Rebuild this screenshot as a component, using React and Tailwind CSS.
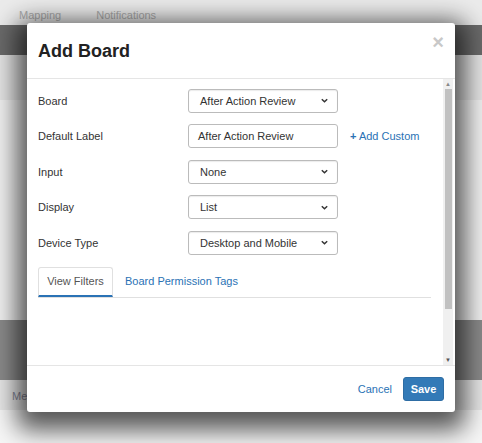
export default function App() {
  const font = { fontFamily: '"Liberation Sans", Arial, sans-serif' };
  const Chev = () => (
    <svg width="9" height="9" viewBox="0 0 10 10" className="ml-auto"><path d="M2 3.5l3 3 3-3" fill="none" stroke="#333" strokeWidth="1.6" /></svg>
  );
  const Sel = ({ v }) => (
    <div className="w-[150px] h-[24px] border border-[#bbb] rounded-[3px] flex items-center pl-[11px] pr-[8px] text-[11px] text-[#333] shadow-[inset_0_1px_1px_rgba(0,0,0,0.08)]">{v}<Chev /></div>
  );
  const Row = ({ label, children }) => (
    <div className="flex items-center h-[35.5px]">
      <div className="w-[150px] text-[11px] text-[#333]">{label}</div>
      {children}
    </div>
  );
  return (
    <div className="relative w-[482px] h-[443px] overflow-hidden bg-[#f6f6f6]" style={font}>
      <div className="h-[25px] bg-[#ebebeb] flex items-end text-[11px] text-[#aaa] pl-[19px] gap-[35px] pb-[2px]"><span>Mapping</span><span>Notifications</span></div>
      <div className="h-[30px] bg-[#6a6a6a]"></div>
      <div className="h-[45px] bg-[#e4e4e4]"></div>
      <div className="h-[220px] bg-[#f0f0f0]"></div>
      <div className="h-[60px] bg-[#8a8a8a]"></div>
      <div className="h-[30px] bg-[#e6e6e6] text-[11px] text-[#889] pl-[12px] pt-[8px]">Me</div>
      <div className="absolute left-[27px] top-[23px] w-[428px] h-[389px] bg-white rounded-[3px] shadow-[0_8px_24px_10px_rgba(0,0,0,0.65)] flex flex-col">
        <div className="h-[56px] border-b border-[#e5e5e5] flex items-center px-[11px] relative">
          <span className="text-[18px] font-bold text-[#222] mt-[2px]">Add Board</span>
          <span className="absolute right-[11px] top-[4px] text-[20px] font-bold text-[#c8c8c8]">×</span>
        </div>
        <div className="flex-1 flex relative">
          <div className="flex-1 pl-[11px] pr-[12px] pt-[4px]">
            <Row label="Board"><Sel v="After Action Review" /></Row>
            <Row label="Default Label">
              <div className="w-[150px] h-[24px] border border-[#bbb] rounded-[3px] flex items-center pl-[9px] text-[11px] text-[#333]">After Action Review</div>
              <span className="ml-[12px] text-[11px] text-[#2a72b5]"><b>+</b> Add Custom</span>
            </Row>
            <Row label="Input"><Sel v="None" /></Row>
            <Row label="Display"><Sel v="List" /></Row>
            <Row label="Device Type"><Sel v="Desktop and Mobile" /></Row>
            <div className="flex mt-[6px] border-b border-[#e0e0e0] text-[11px]">
              <div className="w-[75px] h-[30px] border border-[#e0e0e0] border-b-2 border-b-[#2a72b5] rounded-t-[3px] flex items-center justify-center text-[#555]">View Filters</div>
              <div className="ml-[12px] flex items-center text-[#2a72b5]">Board Permission Tags</div>
            </div>
          </div>
          <div className="w-[10px] mr-[2px] bg-[#f0f0f0] flex flex-col items-center">
            <div className="text-[6px] text-[#888] h-[10px] leading-[10px]">▲</div>
            <div className="w-[7px] h-[220px] bg-[#c1c1c1]"></div>
            <div className="flex-1"></div>
            <div className="text-[6px] text-[#555] h-[10px] leading-[10px]">▼</div>
          </div>
        </div>
        <div className="h-[47px] border-t border-[#e5e5e5] flex items-center justify-end pr-[11px] gap-[11px] text-[11px]">
          <span className="text-[#2a72b5]">Cancel</span>
          <div className="w-[41px] h-[24px] bg-[#337ab7] border border-[#2e6da4] rounded-[3px] text-white font-bold flex items-center justify-center">Save</div>
        </div>
      </div>
    </div>
  );
}
